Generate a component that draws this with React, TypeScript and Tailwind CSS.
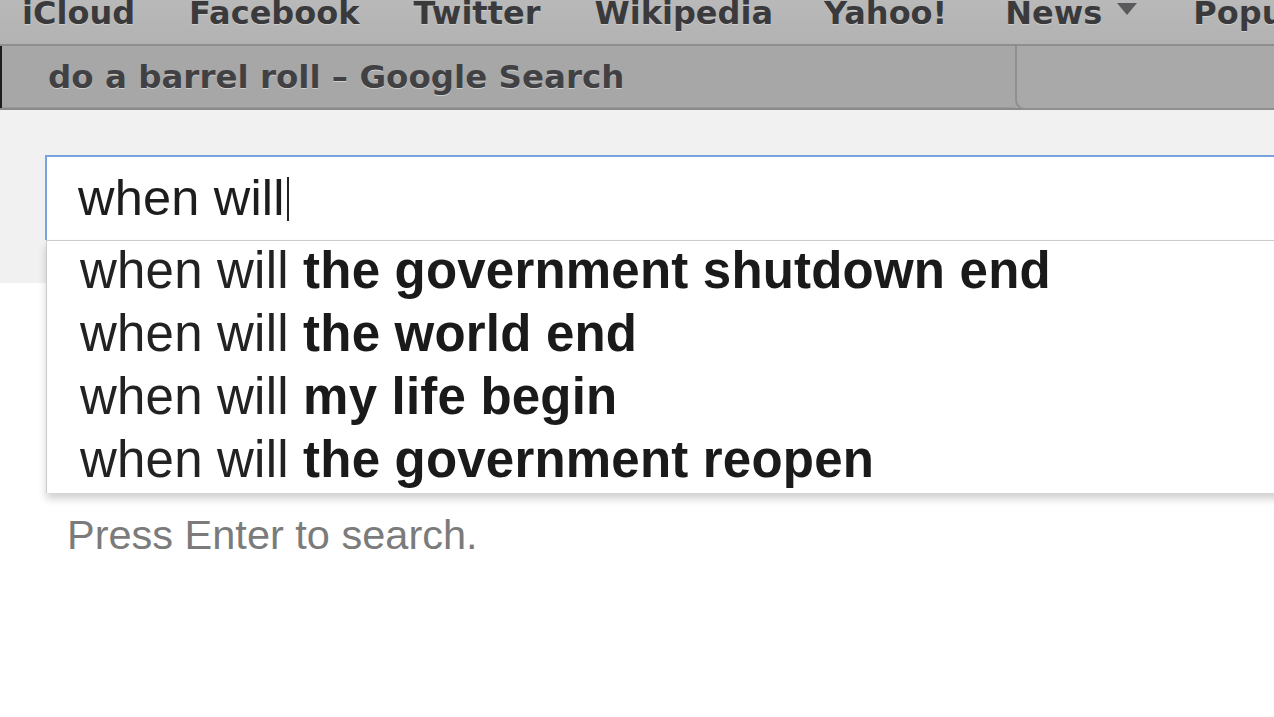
import React from "react";

const items = [
  "the government shutdown end",
  "the world end",
  "my life begin",
  "the government reopen",
];

export default function App() {
  return (
    <div className="w-[1274px] h-[717px] overflow-hidden bg-white flex flex-col">
      {/* bookmarks bar */}
      <div className="h-[46px] shrink-0 bg-gradient-to-b from-[#b9b9b9] to-[#b2b2b2] border-b-2 border-[#8e8e8e] overflow-hidden">
        <div
          className="flex items-start gap-[54px] pl-[22px] -mt-[3px] text-[32px] leading-[32px] font-bold text-[#3a3a3c] whitespace-nowrap [text-shadow:0_1px_0_rgba(255,255,255,0.35)]"
          style={{ fontFamily: '"DejaVu Sans", Verdana, sans-serif' }}
        >
          <span>iCloud</span>
          <span>Facebook</span>
          <span>Twitter</span>
          <span>Wikipedia</span>
          <span className="-ml-[3px]">Yahoo!</span>
          <span className="flex items-center gap-[15px] ml-[4px]">
            News
            <svg width="20" height="12" viewBox="0 0 20 12" className="mt-[-8px]">
              <polygon points="0,0 20,0 10,12" fill="#5a5a5c" />
            </svg>
          </span>
          <span className="ml-[2px]">Popular</span>
        </div>
      </div>

      {/* tab bar */}
      <div className="h-[64px] shrink-0 flex bg-[#a7a7a7] border-b-2 border-[#8a8a8a] relative">
        <div className="w-[2px] bg-[#1e1e1e]" />
        <div className="w-[1013px] flex items-center pl-[46px] border-b border-[#9a9a9a]">
          <span
            className="text-[32.5px] font-bold text-[#414144] whitespace-nowrap [text-shadow:0_1px_0_rgba(255,255,255,0.45)] mt-[1px]"
            style={{ fontFamily: '"DejaVu Sans", Verdana, sans-serif' }}
          >
            do a barrel roll – Google Search
          </span>
        </div>
        <div className="flex-1 border-l-2 border-b-2 border-[#8f8f8f] rounded-bl-[10px] bg-[#a9a9a9] -mb-[2px]" />
      </div>

      {/* content */}
      <div
        className="flex flex-col"
        style={{ fontFamily: '"Liberation Sans", Arial, Helvetica, sans-serif' }}
      >
        <div className="h-[173px] bg-[#f1f1f1] pt-[45px] pl-[45px]">
          <div className="relative w-[1400px]">
            <div className="h-[85px] bg-white border-t-2 border-l-2 border-[#79a3dd] flex items-center pl-[31px]">
              <span className="text-[50.5px] leading-none text-[#1d1d1d] tracking-[0.2px]">when will</span>
              <span className="w-[2px] h-[44px] bg-[#222] ml-[2px]" />
            </div>
            <div className="absolute left-[1px] top-full w-[1400px] bg-white border-t border-l border-[#cbcbcb] shadow-[0_6px_8px_rgba(0,0,0,0.18)] flex flex-col pl-[33px]">
              {items.map((t) => (
                <div
                  key={t}
                  className="h-[63px] pb-[4px] flex items-center text-[51px] leading-none text-[#222] whitespace-nowrap tracking-[0.2px]"
                >
                  <span>when will&nbsp;</span>
                  <span className="font-bold text-[#1a1a1a]">{t}</span>
                </div>
              ))}
            </div>
          </div>
        </div>
        <div className="pl-[67px] mt-[228px] text-[41.5px] leading-[48px] text-[#7b7b7b] whitespace-nowrap">
          Press Enter to search.
        </div>
      </div>
    </div>
  );
}
